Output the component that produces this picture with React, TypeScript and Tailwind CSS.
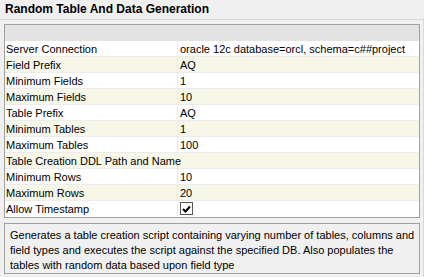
import React from "react";

const rows: { label: string; value: string | null }[] = [
  { label: "Server Connection", value: "oracle 12c database=orcl, schema=c##project" },
  { label: "Field Prefix", value: "AQ" },
  { label: "Minimum Fields", value: "1" },
  { label: "Maximum Fields", value: "10" },
  { label: "Table Prefix", value: "AQ" },
  { label: "Minimum Tables", value: "1" },
  { label: "Maximum Tables", value: "100" },
  { label: "Table Creation DDL Path and Name", value: "" },
  { label: "Minimum Rows", value: "10" },
  { label: "Maximum Rows", value: "20" },
  { label: "Allow Timestamp", value: null },
];

export default function App() {
  return (
    <div
      className="w-[424px] h-[277px] bg-[#f0f0f0] text-[11px] text-black overflow-hidden"
      style={{ fontFamily: '"Liberation Sans", Arial, sans-serif' }}
    >
      <div className="h-[19px] pl-[5px] pt-[2px] font-bold text-[12px] leading-[14px]">
        Random Table And Data Generation
      </div>
      <div className="border-t border-r border-[#d9d9d9] h-[258px] pl-[4px] pr-[3px] pt-[4px] flex flex-col gap-[5px]">
        <div className="border border-[#a0a0a0] bg-white flex flex-col">
          <div className="h-[16px] bg-[#e3e3e3]" />
          {rows.map((r, i) => (
            <div
              key={r.label}
              className={`flex h-[16px] border-b border-[#ececec] last:border-b-0 ${
                i % 2 === 1 ? "bg-[#f7f7e9]" : "bg-white"
              }`}
            >
              <div className="w-[173px] pl-[1px] leading-[16px] border-r border-[#ececec] whitespace-nowrap">
                {r.label}
              </div>
              <div className="flex-1 pl-[2px] leading-[16px] whitespace-nowrap">
                {r.value === null ? (
                  <div className="w-[13px] h-[13px] mt-[1px] border border-[#555] bg-white flex items-center justify-center">
                    <svg width="9" height="8" viewBox="0 0 9 8">
                      <path d="M1 4 L3.5 6.5 L8 1.5" stroke="#000" strokeWidth="2" fill="none" />
                    </svg>
                  </div>
                ) : (
                  r.value
                )}
              </div>
            </div>
          ))}
        </div>
        <div className="border border-[#a0a0a0] bg-[#f0f0f0] h-[51px] pl-[5px] pt-[4px] leading-[15px]">
          Generates a table creation script containing varying number of tables, columns and field types and executes the script against the specified DB. Also populates the tables with random data based upon field type
        </div>
      </div>
    </div>
  );
}
